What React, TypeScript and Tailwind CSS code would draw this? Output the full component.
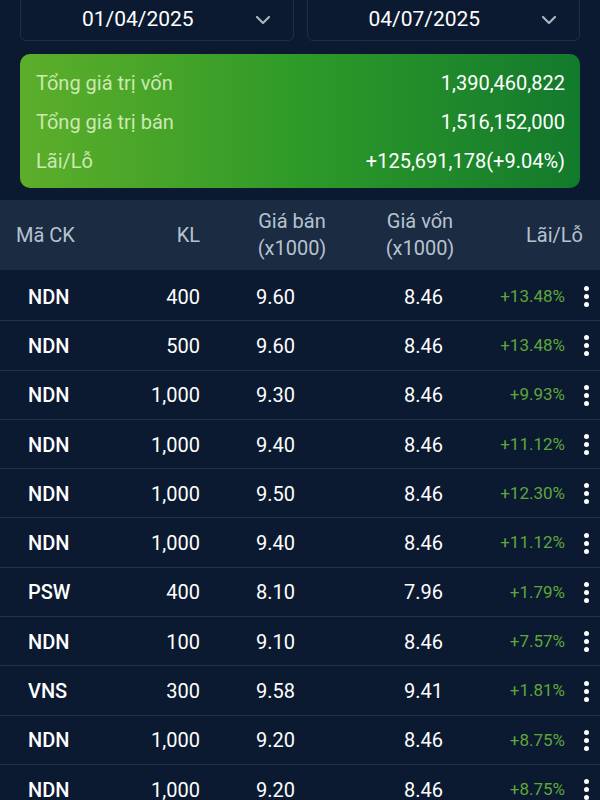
import React from "react";

type Row = { ma: string; kl: string; ban: string; von: string; pct: string };

const rows: Row[] = [
  { ma: "NDN", kl: "400", ban: "9.60", von: "8.46", pct: "+13.48%" },
  { ma: "NDN", kl: "500", ban: "9.60", von: "8.46", pct: "+13.48%" },
  { ma: "NDN", kl: "1,000", ban: "9.30", von: "8.46", pct: "+9.93%" },
  { ma: "NDN", kl: "1,000", ban: "9.40", von: "8.46", pct: "+11.12%" },
  { ma: "NDN", kl: "1,000", ban: "9.50", von: "8.46", pct: "+12.30%" },
  { ma: "NDN", kl: "1,000", ban: "9.40", von: "8.46", pct: "+11.12%" },
  { ma: "PSW", kl: "400", ban: "8.10", von: "7.96", pct: "+1.79%" },
  { ma: "NDN", kl: "100", ban: "9.10", von: "8.46", pct: "+7.57%" },
  { ma: "VNS", kl: "300", ban: "9.58", von: "9.41", pct: "+1.81%" },
  { ma: "NDN", kl: "1,000", ban: "9.20", von: "8.46", pct: "+8.75%" },
  { ma: "NDN", kl: "1,000", ban: "9.20", von: "8.46", pct: "+8.75%" },
];

const Chevron: React.FC = () => (
  <svg width="16" height="10" viewBox="0 0 16 10" fill="none">
    <path d="M2 2l6 6 6-6" stroke="#a9b3c1" strokeWidth="2.2" strokeLinecap="round" strokeLinejoin="round" />
  </svg>
);

const DateBox: React.FC<{ value: string }> = ({ value }) => (
  <div className="flex-1 h-[49px] flex items-center rounded-b-[6px] border border-[#1d2f47] pt-[6px]">
    <span className="flex-1 text-center text-[21px] text-white">{value}</span>
    <span className="mr-[22px] flex items-center">
      <Chevron />
    </span>
  </div>
);

const Dots: React.FC = () => (
  <div className="flex flex-col items-center gap-[3px]">
    <span className="w-[5px] h-[5px] rounded-full bg-white" />
    <span className="w-[5px] h-[5px] rounded-full bg-white" />
    <span className="w-[5px] h-[5px] rounded-full bg-white" />
  </div>
);

const App: React.FC = () => {
  return (
    <div
      className="w-[600px] h-[800px] overflow-hidden bg-[#0b1a30]"
      style={{ fontFamily: "Roboto, 'Noto Sans', sans-serif" }}
    >
      <div className="flex gap-[13px] px-[20px] mt-[-8px]">
        <DateBox value="01/04/2025" />
        <DateBox value="04/07/2025" />
      </div>

      <div className="mx-[20px] mt-[13px] h-[134px] rounded-[10px] bg-gradient-to-r from-[#5cae2a] via-[#2d9a28] to-[#127a2c] pl-[16px] pr-[15px] pt-[9px] text-[20px]">
        <div className="h-[39px] flex items-center justify-between">
          <span className="text-[#cbe9b2]">Tổng giá trị vốn</span>
          <span className="text-white">1,390,460,822</span>
        </div>
        <div className="h-[39px] flex items-center justify-between">
          <span className="text-[#cbe9b2]">Tổng giá trị bán</span>
          <span className="text-white">1,516,152,000</span>
        </div>
        <div className="h-[39px] flex items-center justify-between">
          <span className="text-[#cbe9b2]">Lãi/Lỗ</span>
          <span className="text-white">+125,691,178(+9.04%)</span>
        </div>
      </div>

      <div className="mt-[12px] h-[70px] bg-[#1b2b42] flex items-center text-[20px] text-[#b7c2d0] leading-[27px]">
        <div className="w-[130px] pl-[16px]">Mã CK</div>
        <div className="w-[70px] text-right">KL</div>
        <div className="w-[184px] text-center whitespace-nowrap">
          Giá bán
          <br />
          (x1000)
        </div>
        <div className="w-[72px] text-center whitespace-nowrap">
          Giá vốn
          <br />
          (x1000)
        </div>
        <div className="flex-1 text-right pr-[17px]">Lãi/Lỗ</div>
      </div>

      <div className="pt-[2px]">
        {rows.map((r, i) => (
          <div key={i} className="h-[49.3px] flex items-center border-b border-[#1f3350] text-[20px] text-white pt-[1px]">
            <div className="w-[130px] pl-[28px] font-medium">{r.ma}</div>
            <div className="w-[70px] text-right">{r.kl}</div>
            <div className="w-[95px] text-right">{r.ban}</div>
            <div className="w-[148px] text-right">{r.von}</div>
            <div className="w-[122px] text-right text-[17px] text-[#5ea63b]">{r.pct}</div>
            <div className="flex-1 flex justify-center pl-[7px]">
              <Dots />
            </div>
          </div>
        ))}
      </div>
    </div>
  );
};

export default App;
